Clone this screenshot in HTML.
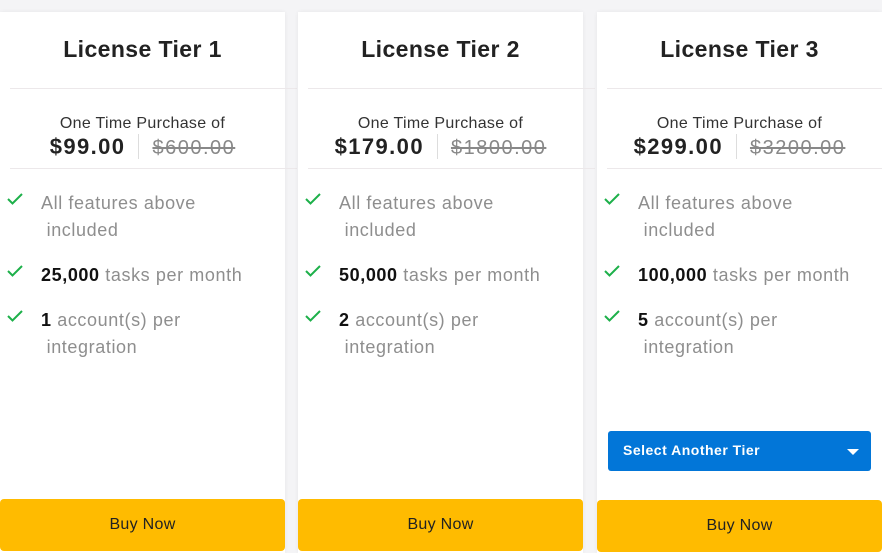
<!DOCTYPE html>
<html><head><style>
body{margin:0;width:882px;height:553px;background:#f4f4f6;font-family:"Liberation Sans",sans-serif;position:relative;overflow:hidden}
.card{position:absolute;top:12px;width:285px;height:541px;background:#fff;box-shadow:0 0 4px rgba(0,0,0,.06)}
.t{position:absolute;top:24px;left:0;width:285px;text-align:center;font-size:23px;letter-spacing:.4px;font-weight:bold;color:#222}
.hr{position:absolute;left:10px;width:287px;height:1px;background:#ece8ea}
.otp{position:absolute;top:103px;left:0;width:285px;text-align:center;font-size:16px;letter-spacing:.3px;color:#333}
.pr{position:absolute;top:122px;left:0;width:285px;text-align:center;font-size:22px;letter-spacing:1.4px;color:#222}
.pr b{padding-right:13px;border-right:1px solid #ddd;margin-right:13px}
.pr s{color:#888;font-size:20px;letter-spacing:1.5px}
.f{position:absolute;left:41px;font-size:18px;letter-spacing:.6px;line-height:27px;color:#8e8e8e;width:240px}
.f b{color:#111}
.ck{position:absolute;left:7px;width:16px;height:12px}
.buy{position:absolute;left:0;width:285px;height:52px;background:#ffbb00;border-radius:4px;text-align:center;line-height:52px;font-size:16px;letter-spacing:.3px;color:#222}
.sel{position:absolute;left:11px;top:419px;width:263px;height:40px;background:#0276d8;border-radius:3px;color:#fff;font-weight:bold;font-size:14px;letter-spacing:.5px;line-height:38px;padding-left:15px;box-sizing:border-box}
.sel:after{content:"";position:absolute;right:12px;top:18px;border:6px solid transparent;border-top:6px solid #fff}
</style></head><body>
<div class="card" style="left:0">
<div class="t">License Tier 1</div><div class="hr" style="top:76px"></div>
<div class="otp">One Time Purchase of</div>
<div class="pr"><b>$99.00</b><s>$600.00</s></div><div class="hr" style="top:156px"></div>
<svg class="ck" style="top:181px" viewBox="0 0 16 12"><path d="M1 6l4.5 4.5L15 1" stroke="#1db04a" stroke-width="2" fill="none"/></svg>
<div class="f" style="top:178px">All features above<br>&nbsp;included</div>
<svg class="ck" style="top:253px" viewBox="0 0 16 12"><path d="M1 6l4.5 4.5L15 1" stroke="#1db04a" stroke-width="2" fill="none"/></svg>
<div class="f" style="top:250px"><b>25,000</b> tasks per month</div>
<svg class="ck" style="top:298px" viewBox="0 0 16 12"><path d="M1 6l4.5 4.5L15 1" stroke="#1db04a" stroke-width="2" fill="none"/></svg>
<div class="f" style="top:295px"><b>1</b> account(s) per<br>&nbsp;integration</div>
<div class="buy" style="top:487px">Buy Now</div>
</div>
<div class="card" style="left:298px">
<div class="t">License Tier 2</div><div class="hr" style="top:76px"></div>
<div class="otp">One Time Purchase of</div>
<div class="pr"><b>$179.00</b><s>$1800.00</s></div><div class="hr" style="top:156px"></div>
<svg class="ck" style="top:181px" viewBox="0 0 16 12"><path d="M1 6l4.5 4.5L15 1" stroke="#1db04a" stroke-width="2" fill="none"/></svg>
<div class="f" style="top:178px">All features above<br>&nbsp;included</div>
<svg class="ck" style="top:253px" viewBox="0 0 16 12"><path d="M1 6l4.5 4.5L15 1" stroke="#1db04a" stroke-width="2" fill="none"/></svg>
<div class="f" style="top:250px"><b>50,000</b> tasks per month</div>
<svg class="ck" style="top:298px" viewBox="0 0 16 12"><path d="M1 6l4.5 4.5L15 1" stroke="#1db04a" stroke-width="2" fill="none"/></svg>
<div class="f" style="top:295px"><b>2</b> account(s) per<br>&nbsp;integration</div>
<div class="buy" style="top:487px">Buy Now</div>
</div>
<div class="card" style="left:597px">
<div class="t">License Tier 3</div><div class="hr" style="top:76px"></div>
<div class="otp">One Time Purchase of</div>
<div class="pr"><b>$299.00</b><s>$3200.00</s></div><div class="hr" style="top:156px"></div>
<svg class="ck" style="top:181px" viewBox="0 0 16 12"><path d="M1 6l4.5 4.5L15 1" stroke="#1db04a" stroke-width="2" fill="none"/></svg>
<div class="f" style="top:178px">All features above<br>&nbsp;included</div>
<svg class="ck" style="top:253px" viewBox="0 0 16 12"><path d="M1 6l4.5 4.5L15 1" stroke="#1db04a" stroke-width="2" fill="none"/></svg>
<div class="f" style="top:250px"><b>100,000</b> tasks per month</div>
<svg class="ck" style="top:298px" viewBox="0 0 16 12"><path d="M1 6l4.5 4.5L15 1" stroke="#1db04a" stroke-width="2" fill="none"/></svg>
<div class="f" style="top:295px"><b>5</b> account(s) per<br>&nbsp;integration</div>
<div class="sel">Select Another Tier</div>
<div class="buy" style="top:488px">Buy Now</div>
</div>
</body></html>
